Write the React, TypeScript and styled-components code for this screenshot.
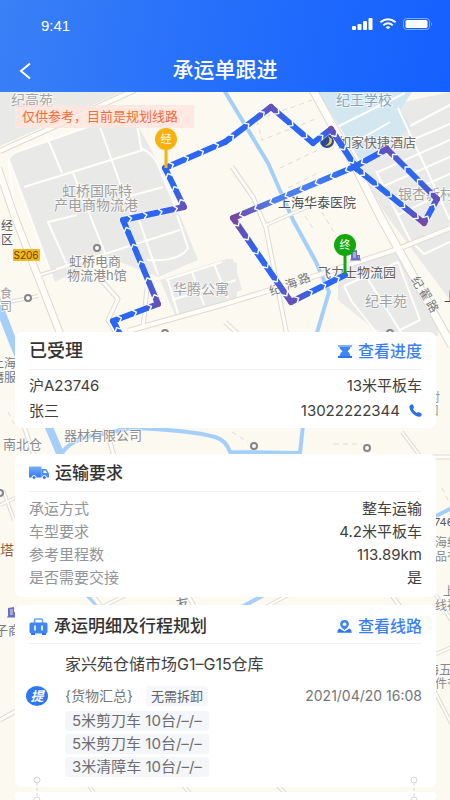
import React from "react";
import styled, { createGlobalStyle } from "styled-components";

const GlobalStyle = createGlobalStyle`
  * { box-sizing: border-box; }
  body {
    margin: 0;
    background: #fcf9f0;
    color: #404040;
    font-family: "Inter", "Noto Sans CJK SC", sans-serif;
    font-size: 15px;
    line-height: 20px;
  }
  h1, h2, p, ul, dl, dd { margin: 0; padding: 0; }
  ul { list-style: none; }
`;

const Screen = styled.div`
  display: flex;
  flex-direction: column;
  min-height: 100vh;
  overflow: hidden;
`;

const TopBar = styled.header`
  background: linear-gradient(100deg, #3a80f6 0%, #2670fb 45%, #1560ff 100%);
  color: #fff;
`;

const StatusBar = styled.div`
  display: flex;
  align-items: center;
  justify-content: space-between;
  padding: 0 17px 0 41px;
  height: 48px;
`;

const Clock = styled.time`
  font-family: "Liberation Sans", sans-serif;
  font-size: 15px;
  padding-top: 4px;
`;

const StatusIcons = styled.div`
  display: flex;
  align-items: center;
  gap: 6px;
`;

const TitleBar = styled.div`
  display: grid;
  grid-template-columns: 40px 1fr 40px;
  align-items: center;
  height: 44px;
`;

const PageTitle = styled.h1`
  text-align: center;
  font-size: 21px;
  font-weight: 500;
  line-height: 28px;
`;

const BackButton = styled.button`
  display: flex;
  justify-content: flex-end;
  padding: 4px 9px 3px 0;
  border: 0;
  background: none;
  color: inherit;
  cursor: pointer;
`;

const Main = styled.main`
  position: relative;
  flex: 1;
  display: flex;
  flex-direction: column;
  padding: 13px 14px 0 15px;
`;

const MapCanvas = styled.svg`
  position: absolute;
  inset: 0;
  width: 100%;
  height: 100%;
`;

const Notice = styled.p`
  position: relative;
  align-self: flex-start;
  padding: 1px 16px 2px 7px;
  margin-bottom: 204px;
  background: rgba(255, 229, 222, 0.8);
  color: #fa6a32;
  font-size: 13px;
`;

const Card = styled.section<{ $gap?: number; $fill?: boolean }>`
  position: relative;
  background: #fff;
  border-radius: 7px;
  padding: 0 14px;
  margin-bottom: ${(p) => p.$gap ?? 0}px;
  flex: ${(p) => (p.$fill ? "1 0 8px" : "none")};
`;

const CardHeader = styled.div<{ $tall?: boolean }>`
  display: flex;
  align-items: center;
  gap: 6px;
  height: ${(p) => (p.$tall ? 39 : 38)}px;
  padding-top: ${(p) => (p.$tall ? 4 : 1)}px;
  border-bottom: 1px solid #f1f1f3;
`;

const CardTitle = styled.h2<{ $large?: boolean }>`
  flex: 1;
  font-size: ${(p) => (p.$large ? 18 : 17)}px;
  font-weight: 500;
  color: #333;
`;

const ActionLink = styled.a`
  display: flex;
  align-items: center;
  gap: 6px;
  color: #3a7ff2;
  font-size: 16px;
  font-weight: 500;
  text-decoration: none;
`;

const Rows = styled.div`
  padding: 3px 0 5px;
`;

const Row = styled.div`
  display: flex;
  align-items: center;
  justify-content: space-between;
  height: 25px;
`;

const PhoneLink = styled.a`
  display: flex;
  align-items: center;
  gap: 9px;
  color: inherit;
  text-decoration: none;
`;

const Specs = styled.dl`
  padding: 5px 0 8px;
`;

const Spec = styled.div`
  display: flex;
  align-items: center;
  justify-content: space-between;
  height: 23px;
`;

const SpecName = styled.dt`
  color: #919498;
`;

const Stop = styled.div`
  display: grid;
  grid-template-columns: 22px 1fr;
  column-gap: 17px;
  margin-left: -3px;
  align-items: center;
  padding: 10px 0;
`;

const Place = styled.p`
  grid-column: 2;
  margin-bottom: 12px;
  font-size: 16px;
`;

const PickupBadge = styled.span`
  display: flex;
  align-items: center;
  justify-content: center;
  width: 22px;
  height: 20px;
  border-radius: 50%;
  background: #2f76f3;
  color: #fff;
  font-size: 13px;
  font-weight: 700;
  font-style: italic;
`;

const Summary = styled.div`
  display: flex;
  align-items: center;
  color: #747679;
  font-size: 14px;
`;

const Tag = styled.span`
  margin-left: 13px;
  padding: 0 5px;
  border-radius: 3px;
  background: #f5f7fa;
  color: #606266;
  font-size: 13px;
`;

const When = styled.time`
  margin-left: auto;
`;

const Goods = styled.ul`
  grid-column: 2;
  display: flex;
  flex-direction: column;
  align-items: flex-start;
  gap: 3px;
  padding-top: 5px;
`;

const GoodsItem = styled.li`
  padding: 0 7px;
  border-radius: 3px;
  background: #f5f6f9;
  color: #6b6d71;
  font-size: 15px;
  line-height: 20px;
`;

const Connector = styled.svg<{ $side: "left" | "right" }>`
  position: absolute;
  bottom: -17px;
  ${(p) => p.$side}: 17px;
  z-index: 1;
`;

type Point = [number, number];

const DEEP = "#2a67ee";
const PURPLE = "#6650b8";
const MAGENTA = "#79479c";

const route: { at: Point; color: string }[] = [
  { at: [121, 336], color: DEEP },
  { at: [113, 321], color: DEEP },
  { at: [158, 304], color: PURPLE },
  { at: [123, 220], color: DEEP },
  { at: [184, 207], color: PURPLE },
  { at: [165, 168], color: DEEP },
  { at: [225, 142], color: DEEP },
  { at: [271, 107], color: PURPLE },
  { at: [313, 143], color: DEEP },
  { at: [331, 129], color: PURPLE },
  { at: [357, 169], color: DEEP },
  { at: [424, 223], color: MAGENTA },
  { at: [437, 199], color: PURPLE },
  { at: [387, 149], color: PURPLE },
  { at: [354, 167], color: DEEP },
  { at: [233, 218], color: MAGENTA },
  { at: [291, 302], color: PURPLE },
  { at: [345, 275], color: DEEP },
];

function Route() {
  const legs = route.slice(1).map((end, i) => ({ start: route[i], end }));
  return (
    <g strokeLinecap="round" strokeLinejoin="round" fill="none">
      <polyline
        points={route.map((r) => r.at.join(",")).join(" ")}
        stroke="#fff"
        strokeOpacity="0.7"
        strokeWidth="7"
      />
      {legs.map(({ start, end }, i) => (
        <g key={i}>
          <linearGradient
            id={`leg${i}`}
            gradientUnits="userSpaceOnUse"
            x1={start.at[0]}
            y1={start.at[1]}
            x2={end.at[0]}
            y2={end.at[1]}
          >
            <stop offset="0" stopColor={start.color} />
            <stop offset="0.4" stopColor={i === 14 ? "#4c80ee" : "#2c66f2"} />
            <stop offset="0.65" stopColor={i === 14 ? "#4c80ee" : "#2c66f2"} />
            <stop offset="1" stopColor={end.color} />
          </linearGradient>
          <line
            x1={start.at[0]}
            y1={start.at[1]}
            x2={end.at[0]}
            y2={end.at[1]}
            stroke={`url(#leg${i})`}
            strokeWidth="6"
          />
        </g>
      ))}
      {legs.map(({ start, end }, i) => {
        const dx = end.at[0] - start.at[0];
        const dy = end.at[1] - start.at[1];
        const length = Math.hypot(dx, dy);
        const angle = (Math.atan2(dy, dx) * 180) / Math.PI;
        const count = Math.max(1, Math.round(length / 17));
        return Array.from({ length: count }, (_, n) => {
          const t = (n + 0.5) / count;
          return (
            <path
              key={`${i}-${n}`}
              d="M-2 -3 L1 0 L-2 3"
              stroke="#fff"
              strokeWidth="1.4"
              transform={`translate(${start.at[0] + dx * t} ${start.at[1] + dy * t}) rotate(${angle})`}
            />
          );
        });
      })}
    </g>
  );
}

function MapPin({ x, y, color, label }: { x: number; y: number; color: string; label: string }) {
  return (
    <g>
      <path d={`M${x} ${y} V${y + 29}`} stroke={color} strokeWidth="3" />
      <circle cx={x} cy={y} r="11" fill={color} />
      <text x={x} y={y + 4} textAnchor="middle" fontSize="11" fill="#fff">
        {label}
      </text>
    </g>
  );
}

const borderedRoads: { d: string; w: number }[] = [
  { d: "M0 151 L135 90", w: 5 },
  { d: "M-2 168 L14 215 L61 336", w: 7 },
  { d: "M128 331 L225 304 L300 281 L398 249 L450 228", w: 5 },
  { d: "M313 90 L357 170 L380 216 L452 346", w: 8 },
  { d: "M102 281 L118 299 L108 320 L118 336", w: 4 },
  { d: "M147 288 L143 328", w: 4 },
  { d: "M232 167 L253 197 L266 228 L287 336", w: 4 },
  { d: "M264 226 L312 205", w: 3 },
  { d: "M40 275 L56 270", w: 3 },
  { d: "M0 304 L38 296", w: 3 },
  { d: "M225 322 L240 336", w: 4 },
  { d: "M22 420 L34 456", w: 4 },
  { d: "M105 425 L114 456", w: 4 },
  { d: "M402 432 L420 456", w: 3 },
  { d: "M432 457 L452 457", w: 4 },
  { d: "M0 505 L15 498", w: 3 },
  { d: "M3 490 L14 520", w: 3 },
  { d: "M88 590 L104 610", w: 4 },
  { d: "M104 606 L128 594", w: 3 },
  { d: "M262 609 L290 594", w: 3 },
  { d: "M390 592 L402 610", w: 4 },
  { d: "M186 592 L196 610", w: 4 },
  { d: "M436 595 L452 622", w: 3 },
  { d: "M436 654 L452 647", w: 3 },
  { d: "M434 690 L452 725", w: 3 },
  { d: "M0 720 L16 711", w: 4 },
  { d: "M88 784 L96 796", w: 3 },
  { d: "M276 784 L288 796", w: 3 },
  { d: "M182 784 L192 796", w: 3 },
];

const estateRoads = [
  "M14 205 L9 164 Q7 156 16 152 L128 113 Q134 111 136 118 L141 148 Q156 155 160 170 L178 213",
  "M9 160 L52 276",
  "M44 130 L62 173",
  "M24 187 L143 150",
  "M73 173 L105 253",
  "M100 127 L133 220",
  "M123 198 L163 187",
  "M77 215 L48 222 L67 265",
  "M38 275 L180 230",
  "M138 217 L158 275",
  "M147 260 Q180 262 188 248 L177 215",
  "M166 280 L222 262",
  "M168 280 L178 314",
  "M172 300 L236 280",
  "M192 272 L204 305",
  "M214 264 L228 298",
  "M335 128 L405 93",
  "M352 144 L390 122",
  "M398 108 L450 220",
  "M410 126 L450 105",
  "M412 140 L450 124",
  "M378 172 L450 140",
  "M384 186 L450 157",
  "M390 200 L450 174",
  "M398 215 L450 190",
  "M376 171 L410 240",
  "M344 286 L398 262 L420 320 L400 330",
  "M344 286 L352 302 L376 332",
  "M366 276 L402 334",
  "M410 240 L424 254 L450 242",
  "M424 236 L450 226",
];

const lanes = [
  "M257 120 L312 100",
  "M257 120 L262 140 L318 118",
  "M280 168 L318 150",
  "M288 188 L320 172",
  "M305 216 L314 230",
  "M322 212 L336 236",
  "M232 432 L248 442",
  "M334 444 L362 444",
  "M8 412 L14 424",
  "M442 488 L450 504",
];

const streams = [
  "M224 90 L268 163 L293 220 L316 262 L329 292 L316 336",
  "M-4 298 L14 345 L62 458",
  "M60 456 Q70 438 98 435 L130 428 Q190 430 215 437 Q226 440 230 452 L300 453 L303 425",
  "M84 592 L98 606",
  "M240 608 L266 594",
  "M434 517 L452 508",
];

const places: { x: number; y: number; text: string; color?: string; size?: number; turn?: number }[] = [
  { x: 11, y: 105, text: "纪高苑", color: "#a3a3a3", size: 14 },
  { x: 62, y: 196, text: "虹桥国际特", color: "#9d9d9d", size: 14 },
  { x: 54, y: 210, text: "产电商物流港", color: "#9d9d9d", size: 14 },
  { x: 336, y: 105, text: "纪王学校", color: "#7fa5bf", size: 14 },
  { x: 338, y: 147, text: "如家快捷酒店", color: "#6c6c6c" },
  { x: 278, y: 207, text: "上海华泰医院", color: "#4d4d4d" },
  { x: 398, y: 199, text: "银杏新村", color: "#a0a0a0", size: 14 },
  { x: 69, y: 266, text: "虹桥电商", color: "#8a8a8a" },
  { x: 67, y: 280, text: "物流港h馆", color: "#8a8a8a" },
  { x: 173, y: 294, text: "华腾公寓", color: "#a3a3a3", size: 14 },
  { x: 318, y: 277, text: "飞力士物流园", color: "#5e5e5e" },
  { x: 365, y: 306, text: "纪丰苑", color: "#a0a0a0", size: 14 },
  { x: 1, y: 230, text: "经", color: "#555" , size: 12 },
  { x: 1, y: 244, text: "区", color: "#555" , size: 12 },
  { x: 0, y: 298, text: "食", color: "#999", size: 12 },
  { x: 0, y: 311, text: "司", color: "#999", size: 12 },
  { x: 269, y: 294, text: "纪", color: "#777", size: 12, turn: -20 },
  { x: 285, y: 288, text: "海", color: "#777", size: 12, turn: -20 },
  { x: 298, y: 283, text: "路", color: "#777", size: 12, turn: -20 },
  { x: 412, y: 287, text: "纪", color: "#777", size: 12, turn: 60 },
  { x: 420, y: 299, text: "翟", color: "#777", size: 12, turn: 60 },
  { x: 427, y: 311, text: "路", color: "#777", size: 12, turn: 60 },
  { x: 444, y: 301, text: "上", color: "#444" },
  { x: -8, y: 368, text: "上海", color: "#777", size: 12 },
  { x: -8, y: 382, text: "磨服", color: "#777", size: 12 },
  { x: 64, y: 440, text: "器材有限公司", color: "#8a8a8a" },
  { x: 3, y: 449, text: "南北仓", color: "#8a8a8a" },
  { x: 428, y: 402, text: "村", color: "#999", size: 12 },
  { x: 427, y: 415, text: "口", color: "#999", size: 12 },
  { x: 434, y: 526, text: "746", color: "#555", size: 11 },
  { x: 435, y: 547, text: "海红", color: "#888", size: 12 },
  { x: 435, y: 561, text: "品有", color: "#888", size: 12 },
  { x: 0, y: 555, text: "塔", color: "#8a5d3b", size: 14 },
  { x: 443, y: 596, text: "上", color: "#888", size: 12 },
  { x: 435, y: 610, text: "线福", color: "#888", size: 12 },
  { x: -18, y: 635, text: "电子商", color: "#777" },
  { x: 176, y: 608, text: "友", color: "#777", turn: -10 },
  { x: 426, y: 674, text: "海五", color: "#888" },
  { x: 435, y: 688, text: "件有", color: "#888", size: 12 },
];

const stations: Point[] = [
  [97, 248],
  [28, 298],
  [254, 446],
  [367, 448],
  [165, 333],
  [390, 333],
  [0, 493],
];

function Building({ x, y }: { x: number; y: number }) {
  return (
    <g transform={`translate(${x} ${y})`}>
      <path d="M0 10 V1 L6 0 V5 H9 V10 Z" fill="#6b70c4" />
      <path d="M2 3 H5 M2 5 H5 M2 7 H5 M7 7 H8" stroke="#fff" strokeWidth="0.8" />
      <path d="M-1 10 H10" stroke="#6b70c4" />
    </g>
  );
}

function CityMap() {
  return (
    <MapCanvas viewBox="0 92 450 708" preserveAspectRatio="xMidYMin slice" aria-label="规划线路地图">
      <rect x="-200" y="92" width="1200" height="1600" fill="#fcf9f1" />
      <g fill="#e9e9e7">
        <path d="M0 92 H122 L0 146 Z" />
        <path d="M8 160 Q8 154 16 151 L128 113 L137 124 L160 166 L198 260 L158 277 L105 256 L55 282 Z" />
        <path d="M160 280 L222 260 L237 263 V298 L176 317 Z" />
        <path d="M225 259 H233 L242 290 L225 296 Z" />
        <path d="M390 105 L450 92 V300 L384 212 L360 168 Z" />
        <path d="M338 272 L396 250 L438 318 V336 L375 330 L338 300 Z" />
        <path d="M372 334 L400 322 L436 336 Z" />
      </g>
      <path d="M318 92 H412 L400 110 L412 128 L360 160 Z" fill="#d3e7f1" />
      <g fill="none" stroke="#fffefa" strokeWidth="2" strokeLinejoin="round">
        {estateRoads.map((d) => (
          <path key={d} d={d} />
        ))}
      </g>
      <g fill="none" stroke="#dedbd2" strokeWidth="1" strokeDasharray="5 4">
        {lanes.map((d) => (
          <path key={d} d={d} />
        ))}
      </g>
      <g fill="none" stroke="#a4cff8" strokeLinejoin="round">
        {streams.map((d, i) => (
          <path key={d} d={d} strokeWidth={i === 1 ? 8 : 4} />
        ))}
      </g>
      <g fill="none" strokeLinejoin="round">
        {borderedRoads.map((r) => (
          <path key={r.d} d={r.d} stroke="#dddad3" strokeWidth={r.w + 1} />
        ))}
        {borderedRoads.map((r) => (
          <path key={r.d} d={r.d} stroke="#fffdf8" strokeWidth={r.w - 1} />
        ))}
      </g>
      <g fill="#fff" stroke="#858585" strokeWidth="2">
        {stations.map(([x, y]) => (
          <circle key={`${x}-${y}`} cx={x} cy={y} r="3" />
        ))}
      </g>
      <g stroke="#fff" strokeOpacity="0.6" strokeWidth="2" paintOrder="stroke">
        {places.map((p) => (
          <text
            key={`${p.text}${p.x}${p.y}`}
            x={p.x}
            y={p.y}
            fontSize={p.size ?? 13}
            fill={p.color}
            transform={p.turn ? `rotate(${p.turn} ${p.x + 6} ${p.y - 5})` : undefined}
          >
            {p.text}
          </text>
        ))}
      </g>
      <rect x="13" y="249" width="27" height="12" rx="1" fill="#f5b81c" />
      <text x="26" y="259" textAnchor="middle" fontSize="10" fill="#5c4508">
        S206
      </text>
      <Building x={351} y={250} />
      <Building x={8} y={607} />
      <path d="M313 181 l4 3 M316 179 v4" stroke="#e5472f" strokeWidth="1.5" />
      <circle cx="327" cy="141" r="7" fill="#2c4796" />
      <path d="M328 136 Q332 142 325 146 Q333 146 332 139 Z" fill="#f3c83e" />
      <Route />
      <MapPin x={166} y={139} color="#f8b10f" label="经" />
      <MapPin x={345} y={245} color="#12a80d" label="终" />
    </MapCanvas>
  );
}

function SignalIcon() {
  return (
    <svg width="21" height="12" viewBox="0 0 21 12" fill="#fff" aria-hidden="true">
      <rect x="0" y="8" width="4" height="4" rx="1" />
      <rect x="5.5" y="6" width="4" height="6" rx="1" />
      <rect x="11" y="3" width="4" height="9" rx="1" />
      <rect x="16.5" y="0" width="4" height="12" rx="1" />
    </svg>
  );
}

function WifiIcon() {
  return (
    <svg width="18" height="12" viewBox="0 0 20 13" fill="none" stroke="#fff" aria-hidden="true">
      <path d="M1.5 4.6 Q10 -2.2 18.5 4.6" strokeWidth="2.2" />
      <path d="M4.8 7.8 Q10 3.6 15.2 7.8" strokeWidth="2.2" />
      <path d="M7.4 10 Q10 7.9 12.6 10 L10 12.4 Z" fill="#fff" stroke="none" />
    </svg>
  );
}

function BatteryIcon() {
  return (
    <svg width="30" height="12" viewBox="0 0 30 12" aria-hidden="true">
      <rect x="0.5" y="0.5" width="26" height="11" rx="3" fill="none" stroke="#fff" strokeOpacity="0.45" />
      <rect x="2.5" y="2" width="22" height="8" rx="1.5" fill="#fff" />
      <path d="M28 4 Q30 6 28 8 Z" fill="#fff" fillOpacity="0.5" />
    </svg>
  );
}

function HourglassIcon() {
  return (
    <svg width="14" height="13" viewBox="0 0 14 13" aria-hidden="true">
      <path d="M0 0 H14 V2 H0 Z" fill="#7fb2f8" />
      <path d="M1.5 2 H12.5 Q12.5 4.5 9.5 6.3 Q12.5 8.2 12.5 11 H1.5 Q1.5 8.2 4.5 6.3 Q1.5 4.5 1.5 2 Z" fill="#3f85f5" />
      <path d="M0 11 H14 V13 H0 Z" fill="#2d72ee" />
    </svg>
  );
}

function PhoneIcon() {
  return (
    <svg width="13" height="13" viewBox="0 0 13 13" aria-hidden="true">
      <path
        d="M2.4 0.4 Q3.5 0 4 1 L5 3 Q5.4 3.9 4.6 4.5 L4 5 Q5 7.6 7.9 9 L8.6 8.3 Q9.3 7.7 10.1 8.2 L12.2 9.6 Q13 10.2 12.6 11.2 Q11.8 13 9.8 12.8 Q6.5 12.4 3.4 9.2 Q0.2 5.8 0.3 2.8 Q0.5 1 2.4 0.4 Z"
        fill="#2c6fe6"
      />
    </svg>
  );
}

function TruckIcon() {
  return (
    <svg width="20" height="14" viewBox="0 0 20 14" aria-hidden="true">
      <defs>
        <linearGradient id="truckBody" x1="0" y1="0" x2="0" y2="1">
          <stop offset="0" stopColor="#76adfb" />
          <stop offset="1" stopColor="#3479f0" />
        </linearGradient>
      </defs>
      <path d="M0 1 Q0 0.5 0.6 0.5 H12.5 V11.5 H0.6 Q0 11.5 0 11 Z" fill="url(#truckBody)" />
      <path d="M12.5 3 H16.5 Q17.2 3 17.6 3.6 L20 7.4 V11 Q20 11.5 19.4 11.5 H12.5 Z" fill="#4e8ef6" />
      <path d="M14.5 4.5 H16.5 L18 7 H14.5 Z" fill="#fff" />
      <circle cx="5" cy="11.5" r="2" fill="#3479f0" stroke="#fff" />
      <circle cx="15.3" cy="11.5" r="2" fill="#3479f0" stroke="#fff" />
    </svg>
  );
}

function SuitcaseIcon() {
  return (
    <svg width="19" height="17" viewBox="0 0 19 17" aria-hidden="true">
      <path d="M5.5 5 V2 Q5.5 1 6.5 1 H12.5 Q13.5 1 13.5 2 V5" fill="none" stroke="#6aa5fa" strokeWidth="1.6" />
      <rect x="0.5" y="4.5" width="18" height="11" rx="1.8" fill="#3f86f5" />
      <path d="M2 15 H6 V17 H2 Z M13 15 H17 V17 H13 Z" fill="#2d72ee" />
      <path d="M6 7.5 V12.5 M13 7.5 V12.5" stroke="#fff" strokeWidth="1.6" />
    </svg>
  );
}

function RouteIcon() {
  return (
    <svg width="15" height="13" viewBox="0 0 15 13" aria-hidden="true">
      <path d="M2.6 8.4 Q0.3 9.4 0.2 12.8 H14.8 Q14.7 9.4 12.4 8.4 L7.5 11.4 Z" fill="#2f77f0" />
      <path d="M7.5 0 A4.4 4.4 0 0 1 11.9 4.3 Q11.9 6.8 7.5 10 Q3.1 6.8 3.1 4.3 A4.4 4.4 0 0 1 7.5 0 Z" fill="#3f85f5" />
      <circle cx="7.5" cy="4.2" r="1.8" fill="#fff" />
    </svg>
  );
}

function CardConnector({ side }: { side: "left" | "right" }) {
  return (
    <Connector $side={side} width="10" height="28" viewBox="0 0 10 28" fill="none" stroke="#d5d6d8" aria-hidden="true">
      <circle cx="5" cy="4" r="3" />
      <path d="M5 7 V21" strokeDasharray="3 2" />
      <circle cx="5" cy="24" r="3" />
    </Connector>
  );
}

const specs = [
  { name: "承运方式", value: "整车运输" },
  { name: "车型要求", value: "4.2米平板车" },
  { name: "参考里程数", value: "113.89km" },
  { name: "是否需要交接", value: "是" },
];

const goods = ["5米剪刀车 10台/–/–", "5米剪刀车 10台/–/–", "3米清障车 10台/–/–"];

export default function App() {
  return (
    <Screen>
      <GlobalStyle />
      <TopBar>
        <StatusBar>
          <Clock>9:41</Clock>
          <StatusIcons>
            <SignalIcon />
            <WifiIcon />
            <BatteryIcon />
          </StatusIcons>
        </StatusBar>
        <TitleBar>
          <BackButton type="button" aria-label="返回">
            <svg width="12" height="18" viewBox="0 0 12 18" fill="none" stroke="currentColor" strokeWidth="2">
              <path d="M11 1.5 L2 9 L11 16.5" />
            </svg>
          </BackButton>
          <PageTitle>承运单跟进</PageTitle>
        </TitleBar>
      </TopBar>
      <Main>
        <CityMap />
        <Notice>仅供参考，目前是规划线路</Notice>

        <Card $gap={26}>
          <CardHeader>
            <CardTitle $large>已受理</CardTitle>
            <ActionLink href="#progress">
              <HourglassIcon />
              查看进度
            </ActionLink>
          </CardHeader>
          <Rows>
            <Row>
              <span>沪A23746</span>
              <span>13米平板车</span>
            </Row>
            <Row>
              <span>张三</span>
              <PhoneLink href="tel:13022222344">
                13022222344
                <PhoneIcon />
              </PhoneLink>
            </Row>
          </Rows>
        </Card>

        <Card $gap={8}>
          <CardHeader>
            <TruckIcon />
            <CardTitle>运输要求</CardTitle>
          </CardHeader>
          <Specs>
            {specs.map((s) => (
              <Spec key={s.name}>
                <SpecName>{s.name}</SpecName>
                <dd>{s.value}</dd>
              </Spec>
            ))}
          </Specs>
        </Card>

        <Card $gap={5}>
          <CardHeader $tall>
            <SuitcaseIcon />
            <CardTitle>承运明细及行程规划</CardTitle>
            <ActionLink href="#route">
              <RouteIcon />
              查看线路
            </ActionLink>
          </CardHeader>
          <Stop>
            <Place>家兴苑仓储市场G1–G15仓库</Place>
            <PickupBadge>提</PickupBadge>
            <Summary>
              <span>{"{货物汇总}"}</span>
              <Tag>无需拆卸</Tag>
              <When dateTime="2021-04-20T16:08">2021/04/20 16:08</When>
            </Summary>
            <Goods>
              {goods.map((g, i) => (
                <GoodsItem key={i}>{g}</GoodsItem>
              ))}
            </Goods>
          </Stop>
          <CardConnector side="left" />
          <CardConnector side="right" />
        </Card>

        <Card $fill />
      </Main>
    </Screen>
  );
}
